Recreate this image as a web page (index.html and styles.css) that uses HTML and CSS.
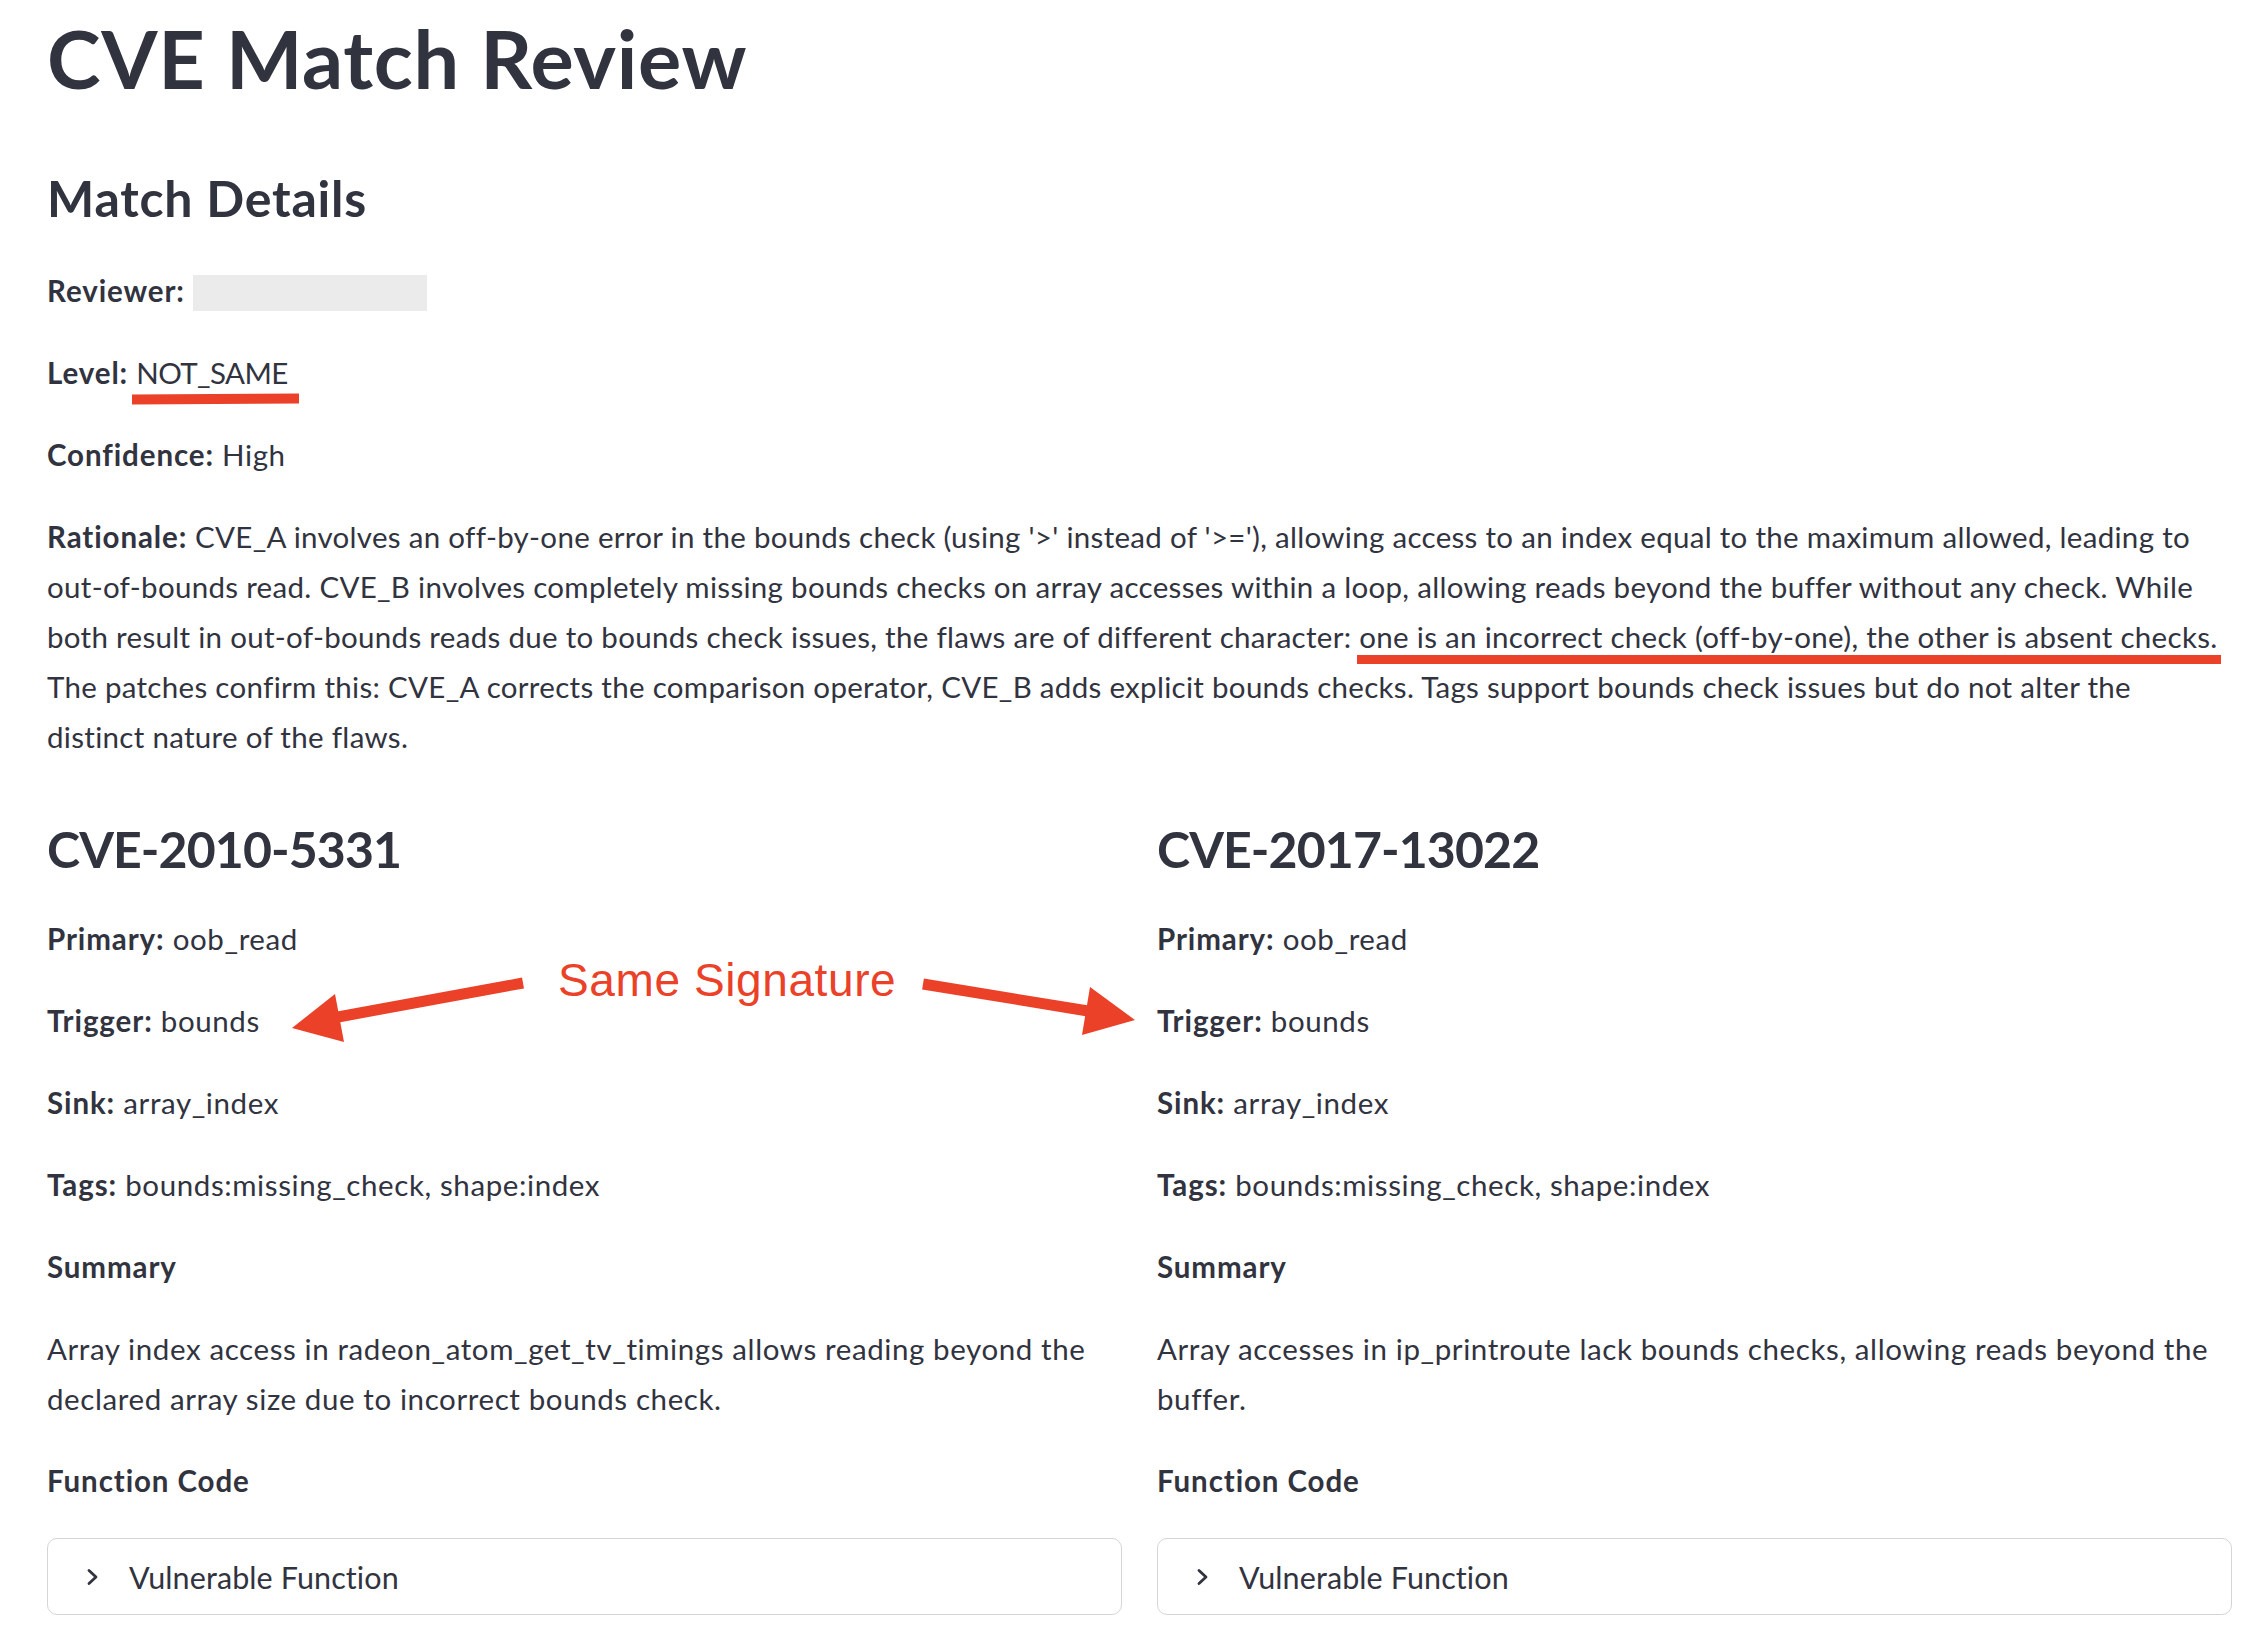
FILE: index.html
```html
<!DOCTYPE html>
<html lang="en">
<head>
<meta charset="utf-8">
<title>CVE Match Review</title>
<link rel="stylesheet" href="styles.css">
</head>
<body>
<div class="page">
  <h1 class="title">CVE Match Review</h1>
  <h3 class="section-title">Match Details</h3>
  <div class="fields">
    <p><strong>Reviewer:</strong> <span class="redacted"></span></p>
    <p><strong>Level:</strong> <span class="marked marked-level">NOT_SAME</span></p>
    <p><strong>Confidence:</strong> High</p>
    <p class="rationale"><strong>Rationale:</strong> CVE_A involves an off-by-one error in the bounds check (using '&gt;' instead of '&gt;='), allowing access to an index equal to the maximum allowed, leading to out-of-bounds read. CVE_B involves completely missing bounds checks on array accesses within a loop, allowing reads beyond the buffer without any check. While both result in out-of-bounds reads due to bounds check issues, the flaws are of different character: <span class="marked marked-line">one is an incorrect check (off-by-one), the other is absent checks.</span> The patches confirm this: CVE_A corrects the comparison operator, CVE_B adds explicit bounds checks. Tags support bounds check issues but do not alter the distinct nature of the flaws.</p>
  </div>

  <div class="columns">
    <div class="col">
      <h3 class="cve-title">CVE-2010-5331</h3>
      <p><strong>Primary:</strong> oob_read</p>
      <p><strong>Trigger:</strong> bounds</p>
      <p><strong>Sink:</strong> array_index</p>
      <p><strong>Tags:</strong> bounds:missing_check, shape:index</p>
      <p><strong>Summary</strong></p>
      <p>Array index access in radeon_atom_get_tv_timings allows reading beyond the declared array size due to incorrect bounds check.</p>
      <p><strong>Function Code</strong></p>
      <div class="expander">
        <svg class="chevron" viewBox="0 0 14 18" width="14" height="18" aria-hidden="true"><polyline points="3,2.5 10,9 3,15.5"/></svg>
        <span class="expander-label">Vulnerable Function</span>
      </div>
    </div>
    <div class="col">
      <h3 class="cve-title">CVE-2017-13022</h3>
      <p><strong>Primary:</strong> oob_read</p>
      <p><strong>Trigger:</strong> bounds</p>
      <p><strong>Sink:</strong> array_index</p>
      <p><strong>Tags:</strong> bounds:missing_check, shape:index</p>
      <p><strong>Summary</strong></p>
      <p>Array accesses in ip_printroute lack bounds checks, allowing reads beyond the buffer.</p>
      <p><strong>Function Code</strong></p>
      <div class="expander">
        <svg class="chevron" viewBox="0 0 14 18" width="14" height="18" aria-hidden="true"><polyline points="3,2.5 10,9 3,15.5"/></svg>
        <span class="expander-label">Vulnerable Function</span>
      </div>
    </div>
  </div>

  <div class="annotation">
    <svg class="arrows" viewBox="0 0 880 110" width="880" height="110" aria-hidden="true">
      <line x1="253" y1="43" x2="68" y2="77" stroke="#EA4128" stroke-width="11"/>
      <polygon points="22,88 65,54 74,102" fill="#EA4128"/>
      <line x1="653" y1="44" x2="818" y2="71" stroke="#EA4128" stroke-width="11"/>
      <polygon points="865,80 820,47 812,95" fill="#EA4128"/>
    </svg>
    <span class="annotation-text">Same Signature</span>
  </div>
</div>
</body>
</html>
```

FILE: styles.css
```css
html, body {
  margin: 0;
  padding: 0;
  background: #ffffff;
}

body {
  color: #31333F;
  font-family: Lato, "Noto Sans", sans-serif;
}

.page {
  position: relative;
  padding: 9px 24px 0 47px;
}

.title {
  font-size: 81px;
  font-weight: 700;
  line-height: 1.2;
  letter-spacing: 0.7px;
  margin: 0 0 62px;
}

.section-title {
  font-size: 50px;
  font-weight: 700;
  line-height: 60px;
  letter-spacing: 0.8px;
  margin: 0 0 38px;
}

.fields {
  display: flex;
  flex-direction: column;
  gap: 32px;
}

p {
  margin: 0;
  font-size: 29.5px;
  line-height: 50px;
  letter-spacing: 0.6px;
}

.rationale {
  letter-spacing: 0.3px;
}

strong {
  font-weight: 700;
  letter-spacing: 0.9px;
}

.redacted {
  display: inline-block;
  width: 234px;
  height: 36px;
  background: #ebebeb;
  vertical-align: -9px;
}

.marked {
  position: relative;
}

.marked::after {
  content: "";
  position: absolute;
  background: #EA4128;
}

.marked-level {
  letter-spacing: -0.6px;
}

.marked-level::after {
  left: -4px;
  right: -12px;
  top: 39px;
  height: 10px;
  transform: rotate(-0.35deg);
}

.marked-line::after {
  left: -2px;
  right: -3px;
  top: 36px;
  height: 9px;
}

.columns {
  display: grid;
  grid-template-columns: 1fr 1fr;
  column-gap: 35px;
  margin-top: 57px;
}

.col {
  display: flex;
  flex-direction: column;
  gap: 32px;
}

.cve-title {
  font-size: 50px;
  font-weight: 700;
  line-height: 60px;
  letter-spacing: -0.9px;
  margin: 0 0 3px;
}

.expander {
  height: 75px;
  border: 1px solid #d5d5d8;
  border-radius: 10px;
  display: flex;
  align-items: center;
  gap: 29px;
  padding-left: 38px;
}

.chevron {
  flex: none;
  fill: none;
  stroke: #31333F;
  stroke-width: 2.8;
  stroke-linecap: round;
  stroke-linejoin: round;
}

.expander-label {
  font-size: 30.5px;
  letter-spacing: 0.1px;
}

.annotation {
  position: absolute;
  left: 270px;
  top: 940px;
  width: 880px;
  height: 110px;
  pointer-events: none;
}

.arrows {
  position: absolute;
  left: 0;
  top: 0;
}

.annotation-text {
  position: absolute;
  left: 288px;
  top: 14px;
  font-family: "Liberation Sans", Arial, sans-serif;
  font-size: 46px;
  line-height: 52px;
  letter-spacing: 0.6px;
  color: #EA4128;
  white-space: nowrap;
}
```
